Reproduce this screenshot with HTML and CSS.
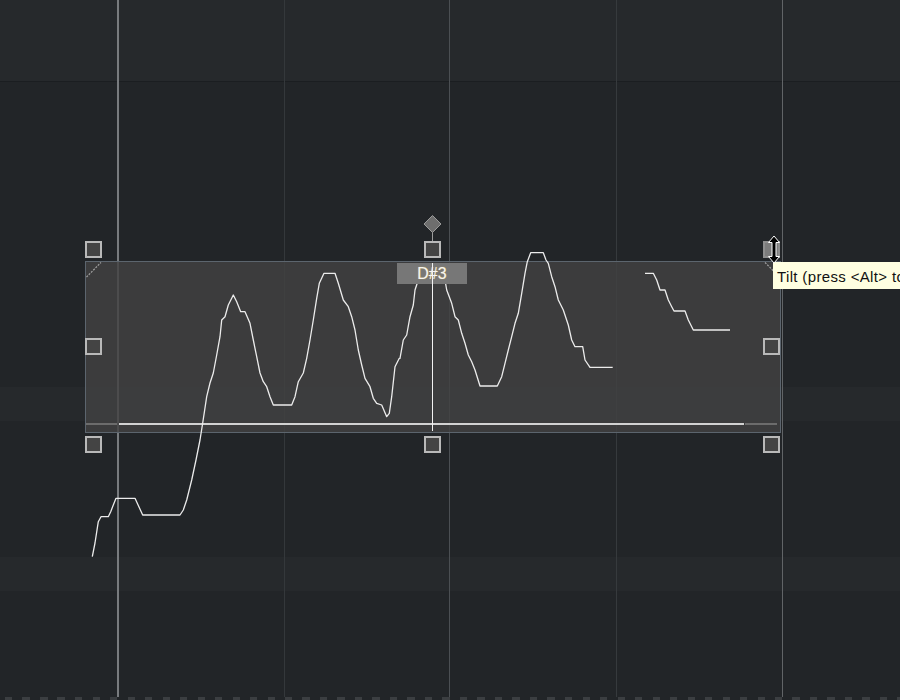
FILE: index.html
```html
<!DOCTYPE html>
<html>
<head>
<meta charset="utf-8">
<link rel="stylesheet" href="styles.css">
</head>
<body>
<div class="canvas">
  <div class="bands">
    <div class="band light b-top"></div>
    <div class="band sep"></div>
    <div class="band dark b-a"></div>
    <div class="band light b-b"></div>
    <div class="band dark b-c"></div>
    <div class="band light b-d"></div>
    <div class="band dark b-e"></div>
    <div class="band dashes"></div>
  </div>

  <div class="vline v1"></div>
  <div class="vline v2"></div>
  <div class="vline v3"></div>
  <div class="vline v4"></div>
  <div class="vline v5"></div>

  <div class="selbox">
    <div class="baseline">
      <span class="seg dim left"></span>
      <span class="seg bright"></span>
      <span class="seg dim right"></span>
    </div>
  </div>

  <svg class="overlay" width="900" height="700" viewBox="0 0 900 700">
    <line x1="86.5" y1="277" x2="101" y2="262.5" class="corner"/>
    <line x1="765" y1="262.5" x2="779.5" y2="277" class="corner"/>
    <line x1="432.5" y1="232" x2="432.5" y2="241" class="stem"/>
    <polygon points="432.5,215.5 441,224 432.5,232.5 424,224" class="diamond"/>
    <polyline class="curve" points="92.3,556.7 95,543 98.3,521.7 101,516.7 108.3,516.7 110.7,511.7 113.3,505 116,498.3 135,498.3 137.3,503.3 142.7,515 180,515 183.3,510 186.7,500 191.7,480 196,460 200,440 202.7,423 206.7,396.7 210,383 213.3,373 216.7,355 220,336.7 221.7,320 225,316.7 228.3,305 233.3,295 236.7,301.7 240.7,311.7 245,311.7 250,323.3 253.3,340 256.7,356.7 260,373 263.3,381.7 266.7,386.7 270,396.7 273.3,405 291.7,405 295,396.7 298.3,381.7 303.3,373 306.7,358.3 310,340 313.3,320 316.7,298.3 319.3,283.3 324,273.3 335,273.3 338.3,283.3 343.3,300 348.3,306.7 351.7,316.7 355,330 358.3,350 361.7,365 365,378.3 370,386.7 373.3,398.3 376.7,403.3 381.7,405 386.7,416.7 389.3,413.3 391.7,396.7 395,366.7 399.3,358.3 400,358.3 403.3,340 406.7,335 410,316.7 413.3,305 415,290 418.3,280 422,268 428,264 436,264 442,270 445,280 446.7,290 451.7,303.3 455,316.7 458.3,320 461.7,333.3 465,343.3 468.3,355 471.7,361.7 475,370 480,386 497.3,386 501.7,376.7 505,363.3 508.3,350 511.7,336.7 515,323.3 518.3,313.3 521.7,293.3 525,273.3 527.3,261.7 530.7,252.7 543.3,252.7 546,260 548.3,263.3 551.7,276.7 555,286.7 558.3,300 563.3,310 568.3,325 571.7,340 575,346.7 582.7,346.7 585,360 590,367.3 612.7,367.3"/>
    <polyline class="curve" points="645,273.3 653.3,273.3 656.7,280 660,290 665,290 668.3,300 671.7,306.7 674,311 685,311 688.3,320 693.3,330 730,330"/>
  </svg>

  <div class="handle h-tl"></div>
  <div class="handle h-tm"></div>
  <div class="handle h-tr hover"></div>
  <div class="handle h-ml"></div>
  <div class="handle h-mr"></div>
  <div class="handle h-bl"></div>
  <div class="handle h-bm"></div>
  <div class="handle h-br"></div>

  <div class="label">D#3</div>
  <div class="playhead"></div>

  <div class="tooltip">Tilt (press &lt;Alt&gt; to temporarily disable snap)</div>

  <svg class="cursor" width="16" height="30" viewBox="0 0 16 30">
    <polygon points="8,1 13.5,7.5 10,7.5 10,21.5 13.5,21.5 8,28 2.5,21.5 6,21.5 6,7.5 2.5,7.5" class="arrow"/>
  </svg>
</div>
</body>
</html>
```

FILE: styles.css
```css
html, body {
  margin: 0;
  padding: 0;
  background: #222528;
}

.canvas {
  position: relative;
  width: 900px;
  height: 700px;
  overflow: hidden;
  font-family: "Liberation Sans", Arial, sans-serif;
}

.bands {
  display: flex;
  flex-direction: column;
  width: 900px;
  height: 700px;
}

.band { width: 100%; flex: none; }
.light { background: #26292c; }
.dark { background: #222528; }
.sep { height: 1px; background: #1b1e21; }
.b-top { height: 81px; }
.b-a { height: 305px; }
.b-b { height: 34px; }
.b-c { height: 136px; }
.b-d { height: 34px; }
.b-e { height: 106px; }
.dashes {
  height: 3px;
  background: repeating-linear-gradient(90deg, #222528 0 5px, #3b3e41 5px 12.5px, #222528 12.5px 17.5px);
}

.vline {
  position: absolute;
  top: 0;
  height: 697px;
  width: 1px;
}
.v1 { left: 117px; width: 2px; background: #787b7e; }
.v2 { left: 284px; background: #34383b; }
.v3 { left: 449px; background: #4b4f53; }
.v4 { left: 616px; background: #363a3d; }
.v5 { left: 782px; background: #616467; }

.selbox {
  position: absolute;
  left: 85px;
  top: 261px;
  width: 696px;
  height: 172px;
  box-sizing: border-box;
  border: 1px solid #5c656e;
  background: rgba(66, 66, 66, 0.82);
  display: flex;
  flex-direction: column;
  justify-content: flex-end;
  padding: 0 3px 7px 0;
}

.baseline {
  display: flex;
  height: 2px;
}
.seg { display: block; height: 2px; }
.seg.dim { background: #6c6c6c; }
.seg.left { width: 31px; margin-right: 2px; }
.seg.bright { width: 627px; background: #d2d2d2; margin-right: 1px; }
.seg.right { width: 32px; }

.overlay {
  position: absolute;
  left: 0;
  top: 0;
}

.curve {
  fill: none;
  stroke: #ececec;
  stroke-width: 1.3;
  stroke-linejoin: round;
}

.corner {
  stroke: #a0a0a0;
  stroke-width: 1.2;
  stroke-dasharray: 2 1.2;
}

.stem { stroke: #9c9c9c; stroke-width: 1; }
.diamond { fill: #6e6e6e; stroke: #9a9a9a; stroke-width: 1; }

.handle {
  position: absolute;
  width: 17px;
  height: 17px;
  box-sizing: border-box;
  border: 2px solid #b9b9b9;
  background: #444444;
}
.handle.hover { background: #7c7c7c; border-color: #8e8e8e; }
.h-tl { left: 85px; top: 241px; }
.h-tm { left: 424px; top: 241px; }
.h-tr { left: 763px; top: 241px; }
.h-ml { left: 85px; top: 338px; }
.h-mr { left: 763px; top: 338px; }
.h-bl { left: 85px; top: 436px; }
.h-bm { left: 424px; top: 436px; }
.h-br { left: 763px; top: 436px; }

.label {
  position: absolute;
  left: 397px;
  top: 263px;
  width: 70px;
  height: 21px;
  background: #777777;
  color: #f4f4f4;
  font-size: 16px;
  line-height: 21px;
  text-align: center;
  text-shadow: 0 0 1px #b8a060, 0 0 1px #b8a060;
}

.playhead {
  position: absolute;
  left: 432px;
  top: 263px;
  width: 1px;
  height: 168px;
  background: #f2f2f2;
}

.tooltip {
  position: absolute;
  left: 773px;
  top: 262px;
  width: 400px;
  height: 27px;
  box-sizing: border-box;
  padding-left: 4px;
  background: #ffffe1;
  color: #111111;
  font-family: "Liberation Sans", Arial, sans-serif;
  font-size: 15px;
  letter-spacing: 0.35px;
  line-height: 29px;
  white-space: nowrap;
}

.cursor {
  position: absolute;
  left: 766px;
  top: 235px;
}
.arrow { fill: #000000; stroke: #ffffff; stroke-width: 1; stroke-linejoin: miter; }
```
